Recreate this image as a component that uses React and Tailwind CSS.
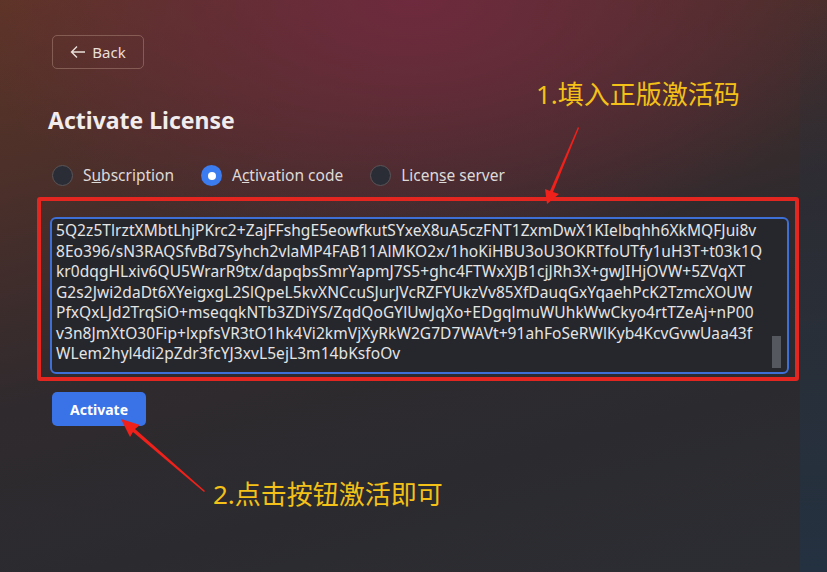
import { useState } from "react";

const codeLines = [
  "5Q2z5TlrztXMbtLhjPKrc2+ZajFFshgE5eowfkutSYxeX8uA5czFNT1ZxmDwX1KIelbqhh6XkMQFJui8v",
  "8Eo396/sN3RAQSfvBd7Syhch2vlaMP4FAB11AlMKO2x/1hoKiHBU3oU3OKRTfoUTfy1uH3T+t03k1Q",
  "kr0dqgHLxiv6QU5WrarR9tx/dapqbsSmrYapmJ7S5+ghc4FTWxXJB1cjJRh3X+gwJIHjOVW+5ZVqXT",
  "G2s2Jwi2daDt6XYeigxgL2SlQpeL5kvXNCcuSJurJVcRZFYUkzVv85XfDauqGxYqaehPcK2TzmcXOUW",
  "PfxQxLJd2TrqSiO+mseqqkNTb3ZDiYS/ZqdQoGYlUwJqXo+EDgqlmuWUhkWwCkyo4rtTZeAj+nP00",
  "v3n8JmXtO30Fip+lxpfsVR3tO1hk4Vi2kmVjXyRkW2G7D7WAVt+91ahFoSeRWlKyb4KcvGvwUaa43f",
  "WLem2hyl4di2pZdr3fcYJ3xvL5ejL3m14bKsfoOv",
];

function Radio({ checked, onClick, children }) {
  return (
    <button onClick={onClick} className="flex items-center gap-[10px]">
      {checked ? (
        <span className="w-[21px] h-[21px] rounded-full bg-[#3b7cf0] flex items-center justify-center">
          <span className="w-[8px] h-[8px] rounded-full bg-white" />
        </span>
      ) : (
        <span className="w-[21px] h-[21px] rounded-full bg-[#2a2d36] border border-[#5a5558]" />
      )}
      <span className="text-[15.5px] text-[#dedad8]">{children}</span>
    </button>
  );
}

export default function App() {
  const [mode, setMode] = useState("code");

  return (
    <div
      className="relative w-full h-screen overflow-hidden bg-[radial-gradient(ellipse_55%_45%_at_50%_0%,#6e2a3e_0%,rgba(108,42,61,0)_100%),linear-gradient(165deg,#5d3526_0%,#4a2f2a_25%,#2f2a2e_52%,#2b2b2f_75%,#2c2d33_100%)]"
      style={{ fontFamily: '"Noto Sans", "Open Sans", sans-serif' }}
    >
      <div className="absolute right-0 top-0 bottom-0 w-[27px] bg-gradient-to-b from-[#2c2b33]/0 via-[#28303b]/60 to-[#243140]" />

      <div className="relative flex flex-col items-start pl-[52px] pt-[35px]">
        <button className="h-[34px] w-[92px] rounded-[5px] border border-[#a07a6e]/60 flex items-center justify-center gap-[6px] text-[15px] text-[#eadfda]">
          <svg width="16" height="14" viewBox="0 0 16 14" fill="none" stroke="currentColor" strokeWidth="1.4">
            <path d="M15 7H2M7 1.5 1.5 7 7 12.5" />
          </svg>
          Back
        </button>

        <h1 className="mt-[36px] -ml-[4px] text-[23px] leading-[30px] font-bold text-[#f2ecec]">
          Activate License
        </h1>

        <div className="mt-[29px] flex items-center gap-[27px]">
          <Radio checked={mode === "sub"} onClick={() => setMode("sub")}>
            S<span className="underline">u</span>bscription
          </Radio>
          <Radio checked={mode === "code"} onClick={() => setMode("code")}>
            A<span className="underline">c</span>tivation code
          </Radio>
          <Radio checked={mode === "server"} onClick={() => setMode("server")}>
            Licen<span className="underline">s</span>e server
          </Radio>
        </div>

        <div className="relative mt-[30px] -ml-[2px] w-[739px] h-[157px] rounded-[6px] border-2 border-[#3d6fd6] bg-[#26272c] pl-[4px] pt-[1px] overflow-hidden">
          {codeLines.map((l, i) => (
            <div key={i} className="whitespace-nowrap text-[15.5px] leading-[20.5px] tracking-[0.07px] text-[#e4e4e4]">
              {l}
            </div>
          ))}
          <div className="absolute right-[6px] bottom-[4px] w-[9px] h-[32px] bg-[#55585e]" />
        </div>

        <button className="mt-[18px] h-[34px] w-[94px] rounded-[5px] bg-[#3a72e8] text-[14px] font-bold text-white">
          Activate
        </button>
      </div>

      {/* annotations */}
      <div className="absolute left-[37px] top-[197px] w-[762px] h-[184px] border-[4px] border-[#e3261f] rounded-[3px] pointer-events-none" />

      <div
        className="absolute left-[536px] top-[77px] text-[26px] leading-[34px] text-[#f3c117]"
        style={{ fontFamily: '"Noto Sans", "Noto Sans CJK SC", sans-serif' }}
      >
        1.填入正版激活码
      </div>
      <div
        className="absolute left-[213px] top-[477px] text-[26px] leading-[34px] text-[#f3c117]"
        style={{ fontFamily: '"Noto Sans", "Noto Sans CJK SC", sans-serif' }}
      >
        2.点击按钮激活即可
      </div>

      <svg className="absolute inset-0 pointer-events-none" width="827" height="572">
        <polygon points="578,127 579,128 553,192 559,194 547,204 545,189 550,191" fill="#f0201a" />
        <polygon points="205,491 204,492 133,432 130,437 121,419 140,425 135,429" fill="#f0201a" />
      </svg>
    </div>
  );
}
